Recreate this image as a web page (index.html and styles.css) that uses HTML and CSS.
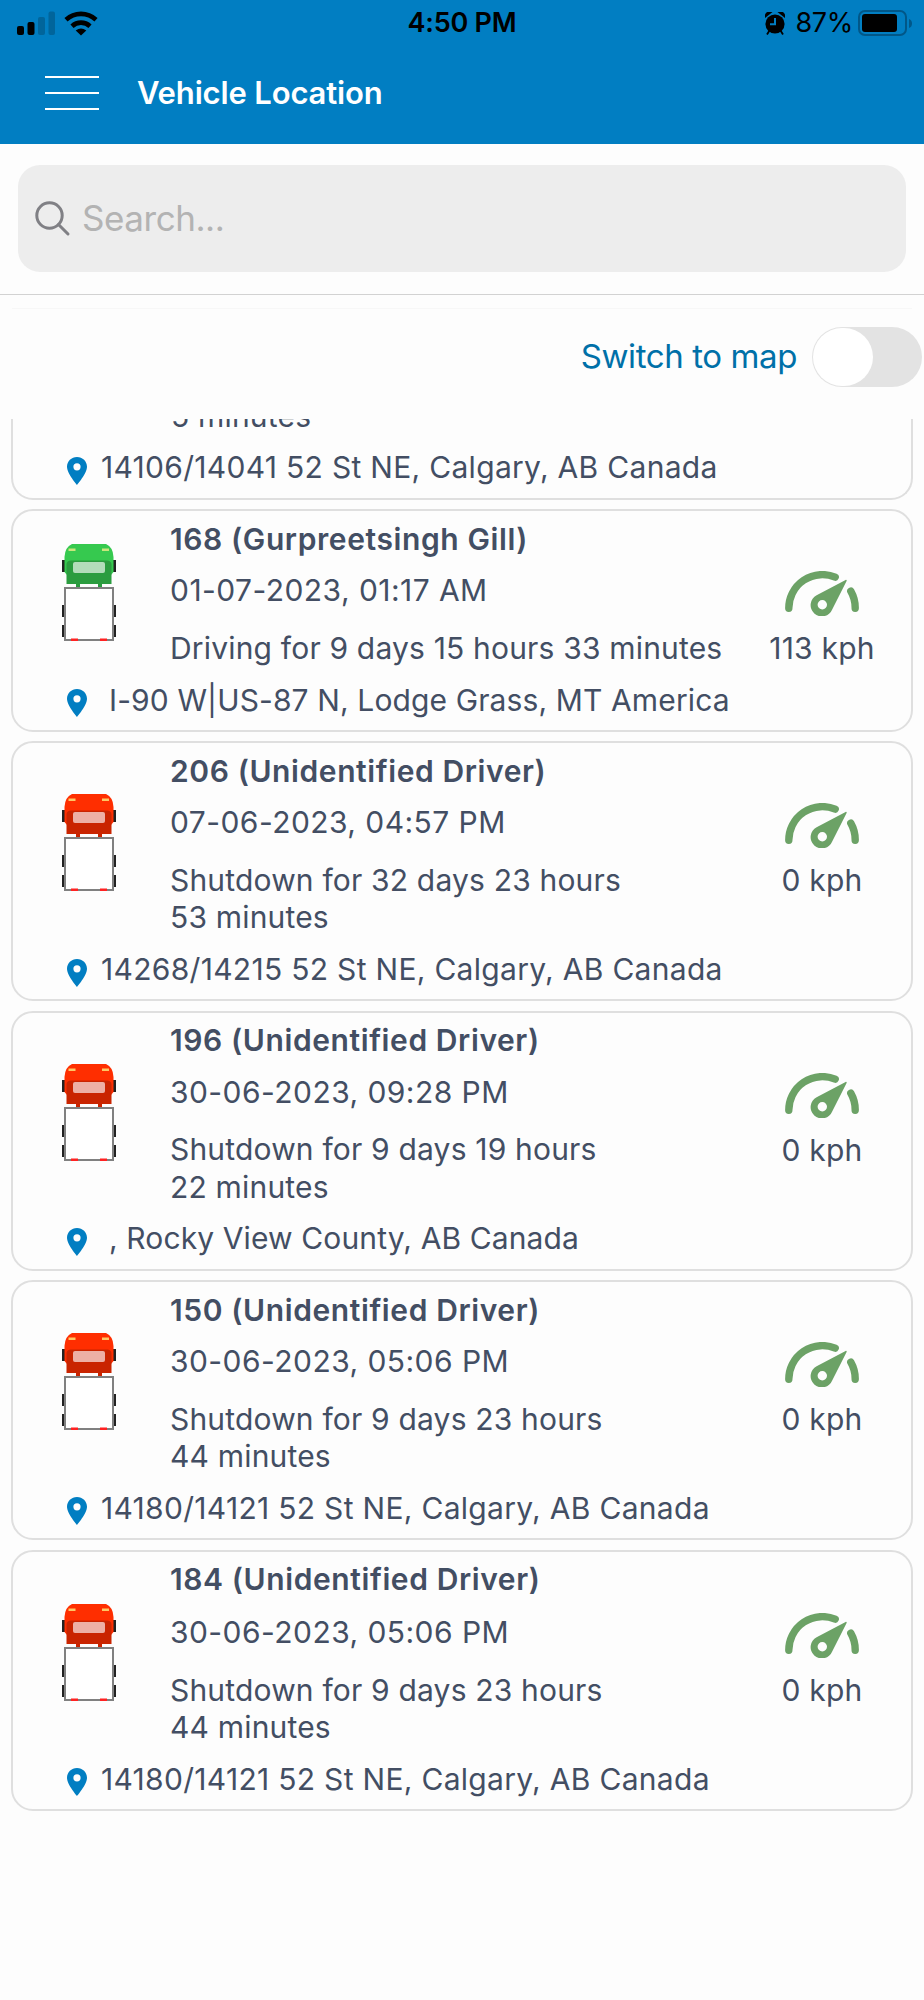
FILE: index.html
```html
<!DOCTYPE html>
<html lang="en">
  <head>
    <meta charset="UTF-8" />
    <meta name="viewport" content="width=device-width, initial-scale=1.0" />
    <title>Vehicle Location</title>
    <link rel="stylesheet" href="styles.css">
  </head>
  <body>
    <svg class="sprite">
      <symbol id="pin" viewBox="0 0 20 28">
        <path fill-rule="evenodd" d="M10 0C4.400 0 0 4.300 0 9.800C0 16.500 10 28 10 28C10 28 20 16.500 20 9.800C20 4.300 15.600 0 10 0ZM10 6.200A3.600 3.600 0 1 1 10 13.400A3.600 3.600 0 1 1 10 6.200Z" />
      </symbol>
      <symbol id="gauge" viewBox="0 0 74 45">
        <path d="M3.800 37.200A33.500 33.500 0 0 1 50.200 6.200M65.800 20.200A33.500 33.500 0 0 1 70.200 37.200" fill="none" stroke="currentColor" stroke-width="7.400" stroke-linecap="round" />
        <path fill="currentColor" fill-rule="evenodd" d="M60.600 9C61.400 8.600 61.900 9.200 61.600 10L47.200 38.400A11.200 11.200 0 1 1 31.600 24.300ZM37.300 29A4.700 4.700 0 1 0 37.300 38.400A4.700 4.700 0 1 0 37.300 29Z" />
      </symbol>
      <symbol id="truck" viewBox="0 0 54 97">
        <path class="tyre" d="M0 16h3v12h-3zM51 16h3v12h-3zM0 61h3v12h-3zM51 61h3v12h-3zM0 81h3v12h-3zM51 81h3v12h-3z" />
        <path class="cab" d="M10 0H44Q51 3 51.500 13V28L49 31H5L2.500 28V13Q3 3 10 0Z" />
        <path class="hood" d="M4.500 20Q5 16.500 9 16.500H45Q49 16.500 49.500 20V40H40v3.500h-4V40H18v3.500h-4V40H4.500Z" />
        <rect class="window" x="11" y="18" width="32" height="11" rx="2" />
        <path class="lamp" d="M6.500 4.500h7v2.500h-7zM40 4.500h7v2.500h-7z" />
        <rect class="box" x="3" y="44" width="48" height="52" />
        <path class="brake" d="M9 94.500h7v2.500h-7zM38 94.500h7v2.500h-7z" />
      </symbol>
    </svg>

    <div class="header">
      <div class="status_bar">
        <div class="status_left">
          <svg class="signal" width="38" height="24" viewBox="0 0 38 24">
            <rect x="0" y="15" width="7" height="9" rx="2" />
            <rect x="10.500" y="11" width="7" height="13" rx="2" />
            <rect class="weak" x="21" y="6" width="7" height="18" rx="2" />
            <rect class="weak" x="31.500" y="0.500" width="6.500" height="23.500" rx="2" />
          </svg>
          <svg class="wifi" width="34" height="25" viewBox="0 0 34 25">
            <path d="M2 8.800A22 22 0 0 1 32 8.800M8 15.200A13.200 13.200 0 0 1 26 15.200" fill="none" stroke="#000" stroke-width="4.600" />
            <path d="M17 24.500L11.700 19.400Q17 15.800 22.300 19.400Z" />
          </svg>
        </div>
        <div class="time">4:50 PM</div>
        <div class="status_right">
          <svg class="alarm" width="20" height="23" viewBox="0 0 20 23">
            <path d="M0.500 4.500Q1 0 5.500 0.500ZM19.500 4.500Q19 0 14.500 0.500ZM2 22.500L4.500 18.500M18 22.500L15.500 18.500" stroke="#000" stroke-width="1.800" />
            <circle cx="10" cy="12" r="9.600" />
            <path class="hands" d="M10 6V12.200H5" />
          </svg>
          <span class="percent">87%</span>
          <svg class="battery" width="54" height="26" viewBox="0 0 54 26">
            <rect class="shell" x="1" y="1" width="47" height="24" rx="6" />
            <rect x="4" y="4" width="35" height="18" rx="3" />
            <path class="nub" d="M51 9Q54 10 54 13.500T51 18Z" />
          </svg>
        </div>
      </div>
      <div class="nav">
        <div class="menu">
          <span></span>
          <span></span>
          <span></span>
        </div>
        <h1 class="title">Vehicle Location</h1>
      </div>
    </div>

    <div class="search_section">
      <div class="search">
        <svg class="search_icon" width="36" height="36" viewBox="0 0 36 36">
          <circle cx="14.500" cy="14.500" r="12.700" />
          <path d="M23.500 23.500L33 33" />
        </svg>
        <span class="placeholder">Search...</span>
      </div>
    </div>

    <div class="divider"></div>
    <div class="switch_row">
      <span class="switch_label">Switch to map</span>
      <div class="switch"><div class="knob"></div></div>
    </div>

    <div class="list">
      <div class="card cut">
        <div class="info">
          <div class="state">5 minutes</div>
        </div>
        <div class="address"><svg class="pin"><use href="#pin" /></svg>14106/14041 52 St NE, Calgary, AB Canada</div>
      </div>

      <div class="card short">
        <div class="row">
          <svg class="truck green"><use href="#truck" /></svg>
          <div class="info">
            <div class="name">168 (Gurpreetsingh Gill)</div>
            <div class="date">01-07-2023, 01:17 AM</div>
            <div class="state">Driving for 9 days 15 hours 33 minutes</div>
          </div>
          <div class="speed"><svg class="gauge"><use href="#gauge" /></svg>113 kph</div>
        </div>
        <div class="address far"><svg class="pin"><use href="#pin" /></svg>I-90 W|US-87 N, Lodge Grass, MT America</div>
      </div>

      <div class="card">
        <div class="row">
          <svg class="truck red"><use href="#truck" /></svg>
          <div class="info">
            <div class="name">206 (Unidentified Driver)</div>
            <div class="date">07-06-2023, 04:57 PM</div>
            <div class="state">Shutdown for 32 days 23 hours<br>53 minutes</div>
          </div>
          <div class="speed"><svg class="gauge"><use href="#gauge" /></svg>0 kph</div>
        </div>
        <div class="address"><svg class="pin"><use href="#pin" /></svg>14268/14215 52 St NE, Calgary, AB Canada</div>
      </div>

      <div class="card">
        <div class="row">
          <svg class="truck red"><use href="#truck" /></svg>
          <div class="info">
            <div class="name">196 (Unidentified Driver)</div>
            <div class="date">30-06-2023, 09:28 PM</div>
            <div class="state">Shutdown for 9 days 19 hours<br>22 minutes</div>
          </div>
          <div class="speed"><svg class="gauge"><use href="#gauge" /></svg>0 kph</div>
        </div>
        <div class="address far"><svg class="pin"><use href="#pin" /></svg>, Rocky View County, AB Canada</div>
      </div>

      <div class="card">
        <div class="row">
          <svg class="truck red"><use href="#truck" /></svg>
          <div class="info">
            <div class="name">150 (Unidentified Driver)</div>
            <div class="date">30-06-2023, 05:06 PM</div>
            <div class="state">Shutdown for 9 days 23 hours<br>44 minutes</div>
          </div>
          <div class="speed"><svg class="gauge"><use href="#gauge" /></svg>0 kph</div>
        </div>
        <div class="address"><svg class="pin"><use href="#pin" /></svg>14180/14121 52 St NE, Calgary, AB Canada</div>
      </div>

      <div class="card last">
        <div class="row">
          <svg class="truck red"><use href="#truck" /></svg>
          <div class="info">
            <div class="name">184 (Unidentified Driver)</div>
            <div class="date">30-06-2023, 05:06 PM</div>
            <div class="state">Shutdown for 9 days 23 hours<br>44 minutes</div>
          </div>
          <div class="speed"><svg class="gauge"><use href="#gauge" /></svg>0 kph</div>
        </div>
        <div class="address"><svg class="pin"><use href="#pin" /></svg>14180/14121 52 St NE, Calgary, AB Canada</div>
      </div>
    </div>
  </body>
</html>
```
FILE: styles.css
```css
* {
  box-sizing: border-box;
}
body {
  margin: 0;
  min-height: 2000px;
  background-color: #fdfdfd;
  font-family: Inter, "Liberation Sans", sans-serif;
  font-size: 30px;
  line-height: 37.4px;
  color: #434e63;
}
.sprite {
  display: none;
}

.header {
  height: 143.500px;
  background-color: #017ec2;
}
.status_bar {
  display: grid;
  grid-template-columns: 1fr auto 1fr;
  align-items: center;
  height: 46px;
  padding: 0 12px;
  color: #000;
}
.status_left {
  display: flex;
  align-items: center;
  gap: 9px;
  padding-left: 5px;
}
.weak {
  fill: #01659b;
}
.time {
  font-size: 27px;
  font-weight: 600;
  letter-spacing: -0.200px;
}
.status_right {
  display: flex;
  align-items: center;
  justify-content: flex-end;
}
.alarm {
  margin-right: 10px;
}
.hands {
  fill: none;
  stroke: #017ec2;
  stroke-width: 2;
}
.percent {
  margin-right: 5px;
  font-size: 27px;
  letter-spacing: -0.300px;
}
.shell {
  fill: none;
  stroke: #015788;
  stroke-width: 2;
}
.nub {
  fill: #015788;
}
.nav {
  display: flex;
  align-items: center;
  gap: 38px;
  height: 94px;
  padding-left: 45px;
}
.menu {
  display: flex;
  flex-direction: column;
  gap: 14px;
}
.menu span {
  width: 54px;
  height: 2px;
  background-color: #fff;
}
.title {
  margin: 0;
  font-size: 31px;
  font-weight: 600;
  letter-spacing: -0.150px;
  color: #fff;
}

.search_section {
  height: 151.500px;
  padding: 21.500px 18px 0;
  border-bottom: 1px solid #d2d2d2;
}
.search {
  display: flex;
  align-items: center;
  height: 107px;
  padding-left: 17px;
  border-radius: 22px;
  background-color: #ededed;
}
.search_icon {
  margin-right: 11px;
  fill: none;
  stroke: #808085;
  stroke-width: 3;
  stroke-linecap: round;
}
.placeholder {
  font-size: 35px;
  letter-spacing: -0.450px;
  color: #b3b3b3;
}

.divider {
  height: 1px;
  margin: 13px 12px 0;
  background-color: #f7f7f7;
}
.switch_row {
  display: flex;
  align-items: center;
  justify-content: flex-end;
  gap: 15px;
  height: 110px;
  padding: 0 2px 15px 0;
}
.switch_label {
  font-size: 33px;
  letter-spacing: -0.400px;
  color: #0070a8;
}
.switch {
  width: 110px;
  height: 60px;
  padding: 1px;
  border-radius: 30px;
  background-color: #e3e3e3;
}
.knob {
  width: 60px;
  height: 58px;
  border-radius: 29px;
  background-color: #fff;
}

.list {
  padding: 0 11px;
}
.card {
  display: flex;
  flex-direction: column;
  height: 260.300px;
  margin-bottom: 9.200px;
  border: 2px solid #dfdfdf;
  border-radius: 22px;
}
.short {
  height: 222.800px;
}
.last {
  height: 261.700px;
}
.last .date {
  margin-top: 15.500px;
}
.last .speed {
  padding-top: 61.500px;
}
.cut {
  height: 81px;
  overflow: hidden;
  border-top: none;
  border-radius: 0 0 22px 22px;
}
.cut .info {
  margin: -21px 0 0 158px;
}
.row {
  display: flex;
}
.truck {
  width: 54px;
  height: 97px;
  margin: 51px 0 0 49px;
}
.last .truck {
  margin-top: 52px;
}
.short .truck {
  margin-top: 33px;
}
.row .info {
  width: 572px;
  margin-left: 54px;
  padding-top: 9.500px;
}
.info,
.address {
  white-space: nowrap;
}
.name {
  font-weight: 600;
  letter-spacing: 0.600px;
}
.date {
  margin-top: 14px;
  letter-spacing: 0.450px;
}
.state {
  margin-top: 20.500px;
  letter-spacing: 0.180px;
}
.cut .state {
  margin-top: 0;
}
.speed {
  display: flex;
  flex-direction: column;
  align-items: center;
  width: 160px;
  padding-top: 60px;
  letter-spacing: 0.200px;
}
.gauge {
  width: 74px;
  height: 45px;
  margin-bottom: 14px;
  color: #6ca266;
}
.address {
  display: flex;
  align-items: center;
  gap: 14px;
  margin: 14px 0 0 54px;
  letter-spacing: 0.300px;
}
.far {
  gap: 22px;
  letter-spacing: 0.120px;
}
.pin {
  width: 20px;
  height: 28px;
  margin-top: 6px;
  fill: #017ec2;
}

.tyre {
  fill: #222;
}
.box {
  fill: #fff;
  stroke: #808080;
  stroke-width: 2;
}
.brake {
  fill: #f22;
}
.cab {
  fill: var(--cab);
}
.hood {
  fill: var(--hood);
}
.window {
  fill: var(--window);
}
.lamp {
  fill: var(--lamp);
}
.green {
  --cab: #36c94f;
  --hood: #2b9c3f;
  --window: #b3dcba;
  --lamp: #c9e67c;
}
.red {
  --cab: #ff2e00;
  --hood: #c92400;
  --window: #edb0a5;
  --lamp: #ffc663;
}
```
